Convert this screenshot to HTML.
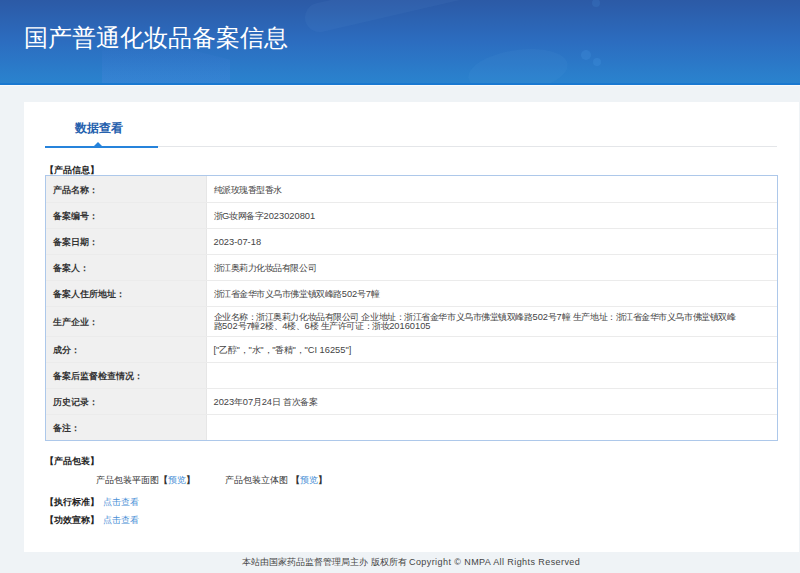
<!DOCTYPE html>
<html><head><meta charset="utf-8">
<style>
*{margin:0;padding:0;box-sizing:border-box;}
html,body{width:800px;height:573px;overflow:hidden;background:#eff3f6;font-family:"Liberation Sans",sans-serif;color:#333;}
#hd{position:absolute;left:0;top:0;width:800px;height:85px;overflow:hidden;
 background:linear-gradient(180deg,#2c5aa6 0%,#2c6dc0 50%,#2a84cf 100%);}
#hd .bl{position:absolute;left:0;bottom:0;width:800px;height:2px;background:#1a78d0;}
#hd h1{position:absolute;left:23.5px;top:22.8px;font-size:23.8px;font-weight:normal;color:#fff;letter-spacing:0;white-space:nowrap;line-height:30px;}
#hl{position:absolute;left:0;top:85px;width:800px;height:1px;background:#f8fafc;}
#panel{position:absolute;left:24px;top:101.5px;width:775px;height:450.5px;background:#fff;}
#tabline{position:absolute;left:45px;top:146px;width:732px;height:1px;background:#e4e6e9;}
#tabblue{position:absolute;left:45px;top:146px;width:113px;height:1.5px;background:#2683db;}
#tri{position:absolute;left:93.5px;top:141.5px;width:0;height:0;border-left:4.5px solid transparent;border-right:4.5px solid transparent;border-bottom:4.5px solid #2683db;}
#tabtxt{position:absolute;left:75px;top:118.6px;font-size:12.2px;font-weight:bold;color:#2560ad;line-height:18px;white-space:nowrap;}
.sec{position:absolute;left:45px;font-size:8.8px;font-weight:bold;color:#222;line-height:12px;white-space:nowrap;}
#tbl{position:absolute;left:45px;top:175px;width:733px;border:1px solid #adc8ea;}
.r{position:relative;height:25.9px;border-top:1px solid #ebebeb;display:flex;}
.r:first-child{border-top:none;height:26px;}
.r .l{width:161px;background:#f0f0f0;border-right:1px solid #e6e6e6;font-weight:bold;font-size:8.7px;color:#333;padding-left:7px;padding-top:3px;display:flex;align-items:center;white-space:nowrap;}
.r .v i{font-style:normal;letter-spacing:0;}
.r .v{flex:1;font-size:9.3px;letter-spacing:-0.45px;color:#444;padding-left:6.5px;padding-top:2px;display:flex;align-items:center;white-space:nowrap;}
.r.tall{height:30.9px;}
.r.tall .v{line-height:9px;padding-top:0;}
.pk{position:absolute;font-size:9px;color:#333;line-height:12px;white-space:nowrap;}
.lk{color:#4a8fd6;}
#ft{position:absolute;left:242px;top:556px;font-size:9px;color:#444;line-height:12px;white-space:nowrap;}
</style></head><body>
<div id="hd">
 <div style="position:absolute;left:305px;top:3px;width:320px;height:29px;border-radius:15px;background:rgba(130,180,235,0.06);transform:rotate(-13deg);transform-origin:14.5px 50%;"></div>
 <div style="position:absolute;left:102px;top:46px;width:128px;height:39px;background:linear-gradient(180deg,rgba(110,140,240,0.02),rgba(110,140,240,0.17));clip-path:polygon(0 0,70% 10%,100% 35%,100% 100%,0 100%);"></div>
 <div style="position:absolute;left:468px;top:50px;width:100px;height:42px;border-radius:50%;background:rgba(120,190,240,0.06);transform:rotate(-8deg);"></div>
 <div style="position:absolute;left:581px;top:50px;width:10px;height:10px;border-radius:50%;background:rgba(80,160,235,0.2);"></div>
 <div style="position:absolute;left:593px;top:57.5px;width:8px;height:8px;border-radius:50%;background:rgba(80,160,235,0.2);"></div>
 <div style="position:absolute;left:592px;top:-1.5px;width:8px;height:8px;border-radius:50%;background:rgba(80,160,235,0.15);"></div>
 <h1>国产普通化妆品备案信息</h1>
 <div class="bl"></div>
</div>
<div id="hl"></div>
<div id="panel"></div>
<div id="tabtxt">数据查看</div>
<div id="tabline"></div>
<div id="tabblue"></div>
<div id="tri"></div>
<div class="sec" style="top:164px;">【产品信息】</div>
<div id="tbl">
 <div class="r"><div class="l">产品名称：</div><div class="v"><p>纯派玫瑰香型香水</p></div></div>
 <div class="r"><div class="l">备案编号：</div><div class="v"><p>浙<i>G</i>妆网备字<i>2023020801</i></p></div></div>
 <div class="r"><div class="l">备案日期：</div><div class="v"><p><i>2023-07-18</i></p></div></div>
 <div class="r"><div class="l">备案人：</div><div class="v"><p>浙江奥莉力化妆品有限公司</p></div></div>
 <div class="r"><div class="l">备案人住所地址：</div><div class="v"><p>浙江省金华市义乌市佛堂镇双峰路<i>502</i>号<i>7</i>幢</p></div></div>
 <div class="r tall"><div class="l">生产企业：</div><div class="v"><p>企业名称：浙江奥莉力化妆品有限公司<i> </i>企业地址：浙江省金华市义乌市佛堂镇双峰路<i>502</i>号<i>7</i>幢<i> </i>生产地址：浙江省金华市义乌市佛堂镇双峰<br>路<i>502</i>号<i>7</i>幢<i>2</i>楼、<i>4</i>楼、<i>6</i>楼<i> </i>生产许可证：浙妆<i>20160105</i></p></div></div>
 <div class="r"><div class="l">成分：</div><div class="v"><p><i>["</i>乙醇<i>"</i>，<i>"</i>水<i>"</i>，<i>"</i>香精<i>"</i>，<i>"CI 16255"]</i></p></div></div>
 <div class="r"><div class="l">备案后监督检查情况：</div><div class="v"><p></p></div></div>
 <div class="r"><div class="l">历史记录：</div><div class="v"><p><i>2023</i>年<i>07</i>月<i>24</i>日<i> </i>首次备案</p></div></div>
 <div class="r"><div class="l">备注：</div><div class="v"><p></p></div></div>
</div>
<div class="sec" style="top:455px;">【产品包装】</div>
<div class="pk" style="left:96px;top:474px;">产品包装平面图<b>【</b><span class="lk">预览</span><b>】</b></div>
<div class="pk" style="left:225px;top:474px;">产品包装立体图 <b>【</b><span class="lk">预览</span><b>】</b></div>
<div class="sec" style="top:496px;">【执行标准】 <span class="lk" style="font-weight:normal;font-size:9px;margin-left:1.5px;">点击查看</span></div>
<div class="sec" style="top:514px;">【功效宣称】 <span class="lk" style="font-weight:normal;font-size:9px;margin-left:1.5px;">点击查看</span></div>
<div id="ft">本站由国家药品监督管理局主办 版权所有 <span style="letter-spacing:0.42px">Copyright © NMPA All Rights Reserved</span></div>
</body></html>
